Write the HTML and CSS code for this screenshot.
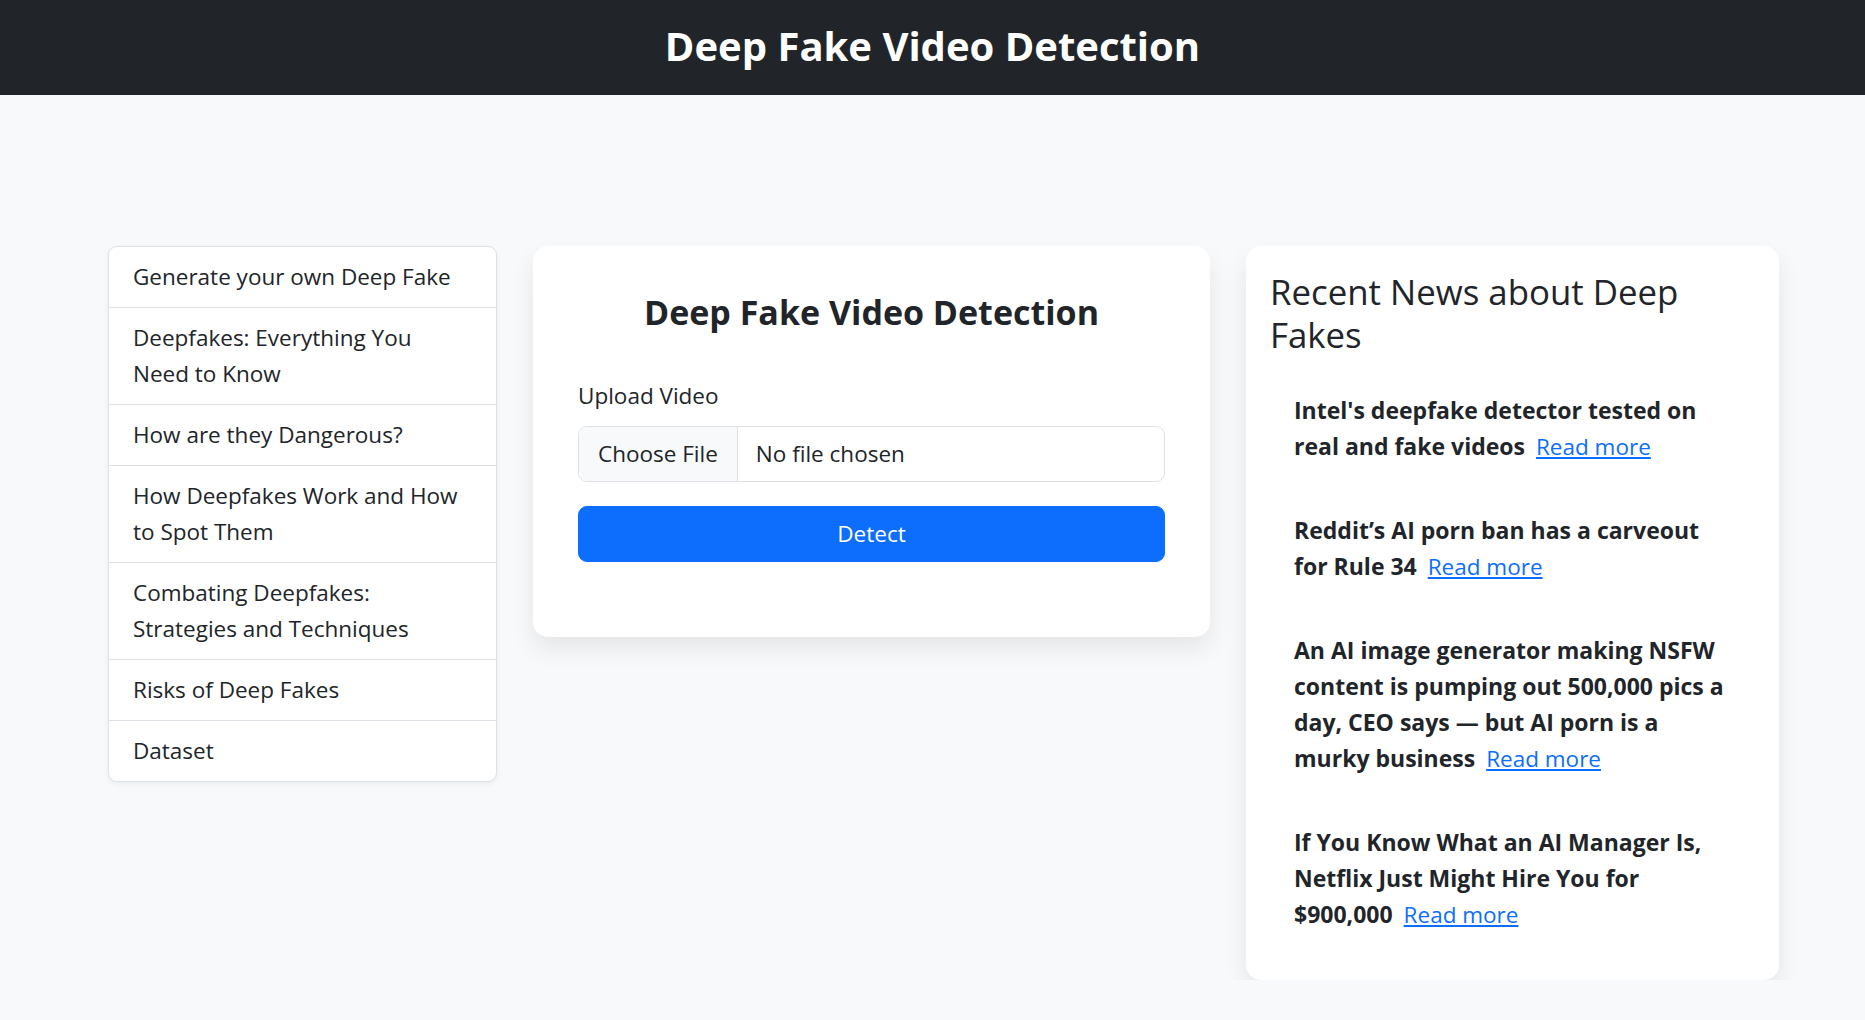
FILE: index.html
```html
<!DOCTYPE html>
<html lang="en">
<head>
<meta charset="utf-8">
<title>Deep Fake Video Detection</title>
<link rel="stylesheet" href="styles.css">
</head>
<body>
<header class="topbar">
  <h1 class="topbar-title">Deep Fake Video Detection</h1>
</header>
<main class="layout">
  <nav class="side-list">
    <a class="side-item" href="#">Generate your own Deep Fake</a>
    <a class="side-item" href="#">Deepfakes: Everything You Need to Know</a>
    <a class="side-item" href="#">How are they Dangerous?</a>
    <a class="side-item" href="#">How Deepfakes Work and How to Spot Them</a>
    <a class="side-item" href="#">Combating Deepfakes: Strategies and Techniques</a>
    <a class="side-item" href="#">Risks of Deep Fakes</a>
    <a class="side-item" href="#">Dataset</a>
  </nav>
  <section class="detect-card">
    <h2 class="detect-title">Deep Fake Video Detection</h2>
    <form class="detect-form">
      <label class="field-label" for="video">Upload Video</label>
      <input class="file-input" id="video" type="file">
      <button class="detect-btn" type="button">Detect</button>
    </form>
  </section>
  <aside class="news-card">
    <h3 class="news-title">Recent News about Deep Fakes</h3>
    <ul class="news-list">
      <li class="news-item"><strong>Intel's deepfake detector tested on real and fake videos</strong> <a class="news-link" href="#">Read more</a></li>
      <li class="news-item"><strong>Reddit’s AI porn ban has a carveout for Rule 34</strong> <a class="news-link" href="#">Read more</a></li>
      <li class="news-item"><strong>An AI image generator making NSFW content is pumping out 500,000 pics a day, CEO says — but AI porn is a murky business</strong> <a class="news-link" href="#">Read more</a></li>
      <li class="news-item"><strong>If You Know What an AI Manager Is, Netflix Just Might Hire You for $900,000</strong> <a class="news-link" href="#">Read more</a></li>
    </ul>
  </aside>
</main>
</body>
</html>
```

FILE: styles.css
```css
* { box-sizing: border-box; }
body {
  margin: 0;
  background: #f8f9fa;
  color: #212529;
  font-family: "Open Sans", "Noto Sans", sans-serif;
  font-size: 22.5px;
  line-height: 36px;
}
.topbar {
  height: 95px;
  background: #212529;
  display: flex;
  align-items: center;
  justify-content: center;
  padding-bottom: 4px;
}
.topbar-title {
  margin: 0;
  color: #fff;
  font-size: 40px;
  font-weight: 700;
  line-height: 1.2;
}
.layout {
  display: flex;
  align-items: flex-start;
  gap: 36px;
  padding: 151px 0 0 108px;
}
.side-list {
  width: 389px;
  flex: none;
  display: flex;
  flex-direction: column;
  background: #fff;
  border: 1px solid #dee2e6;
  border-radius: 9px;
  box-shadow: 0 2px 5px rgba(0,0,0,0.06);
  overflow: hidden;
}
.side-item {
  padding: 12px 30px 12px 24px;
  color: #212529;
  text-decoration: none;
  border-bottom: 1px solid #dee2e6;
}
.side-item:last-child { border-bottom: 0; }
.detect-card {
  width: 677px;
  flex: none;
  background: #fff;
  border-radius: 15px;
  padding: 45px 45px 75px;
  box-shadow: 0 12px 24px rgba(0,0,0,0.08);
}
.detect-title {
  margin: 0 0 44px;
  text-align: center;
  font-size: 34px;
  font-weight: 700;
  line-height: 43px;
}
.detect-form { display: flex; flex-direction: column; }
.field-label { margin-bottom: 12px; }
.file-input {
  height: 56px;
  border: 1px solid #dee2e6;
  border-radius: 9px;
  font: inherit;
  color: #212529;
  background: #fff;
  padding: 9px 18px;
  margin-bottom: 24px;
}
.file-input::file-selector-button {
  font: inherit;
  color: #212529;
  background: #f8f9fa;
  border: 0;
  border-right: 1px solid #dee2e6;
  border-radius: 0;
  padding: 9px 19px;
  margin: -9px 18px -9px -18px;
  height: 54px;
}
.detect-btn {
  height: 56px;
  border: 1px solid #0d6efd;
  border-radius: 9px;
  background: #0d6efd;
  color: #fff;
  font: inherit;
}
.news-card {
  width: 533px;
  flex: none;
  background: #fff;
  border-radius: 15px;
  padding: 24px;
  box-shadow: 0 12px 24px rgba(0,0,0,0.08);
}
.news-title {
  margin: 0 0 12px;
  font-size: 34.8px;
  font-weight: 400;
  line-height: 43px;
}
.news-list { list-style: none; margin: 0; padding: 0; }
.news-item {
  padding: 24px 28px 24px 24px;
  font-size: 23px;
  line-height: 36px;
}
.news-item strong { font-weight: 700; }
.news-link {
  color: #0d6efd;
  margin-left: 5px;
  font-size: 22.5px;
  line-height: 1;
}
```
